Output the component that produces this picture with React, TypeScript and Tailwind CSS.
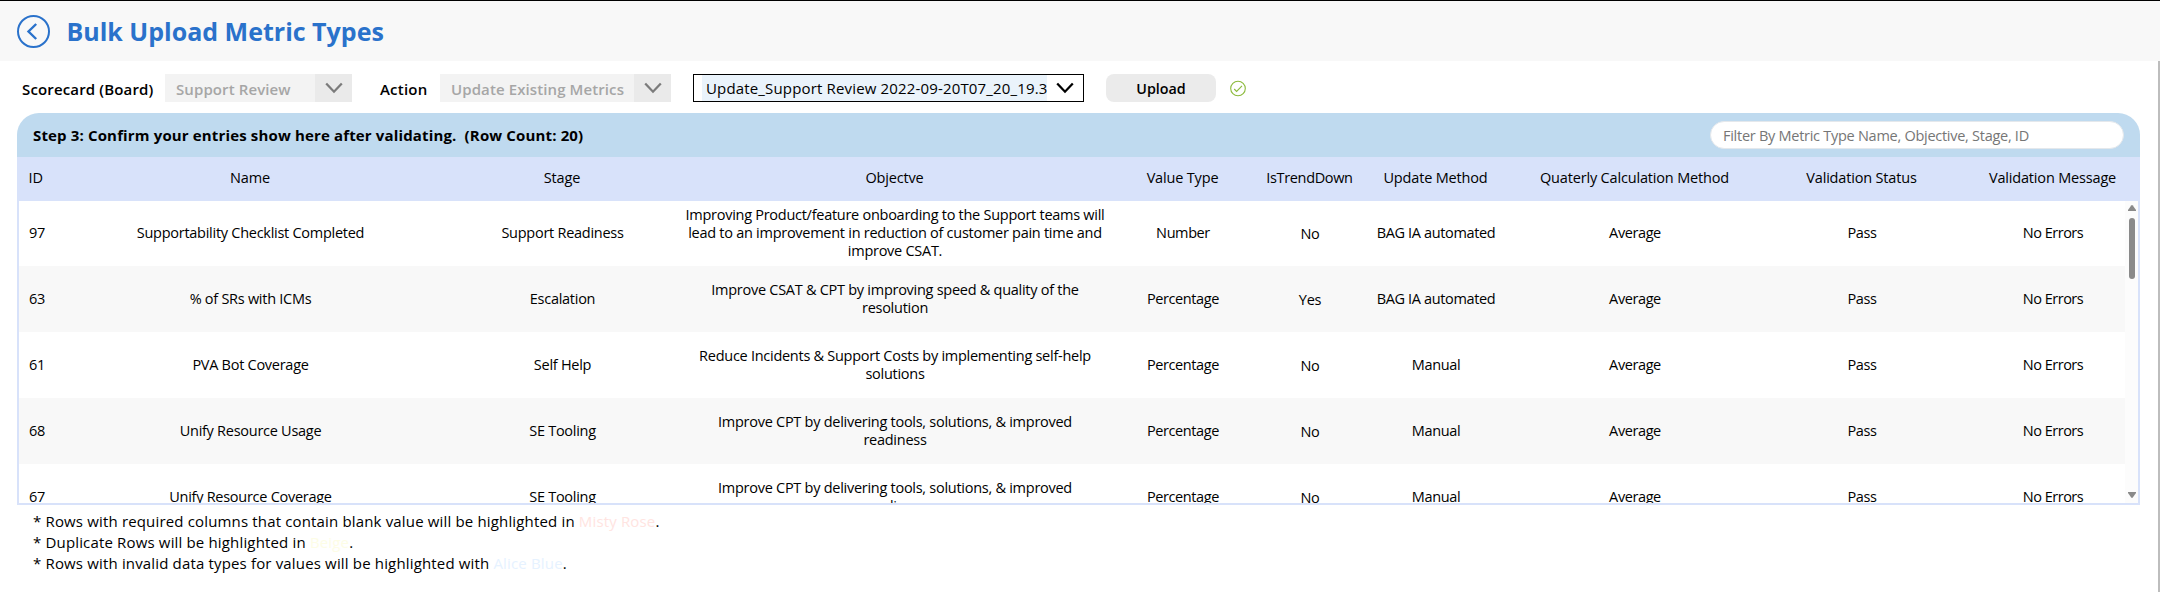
import React from "react";

const COLUMNS =
  "grid grid-cols-[42px_379px_245px_420px_156px_98px_154px_244px_210px_172px] w-[2120px] shrink-0 items-center text-center";

type Metric = {
  id: number;
  name: string;
  stage: string;
  objective: string[];
  valueType: string;
  trendDown: string;
  method: string;
};

const METRICS: Metric[] = [
  {
    id: 97,
    name: "Supportability Checklist Completed",
    stage: "Support Readiness",
    objective: [
      "Improving Product/feature onboarding to the Support teams will",
      "lead to an improvement in reduction of customer pain time and",
      "improve CSAT.",
    ],
    valueType: "Number",
    trendDown: "No",
    method: "BAG IA automated",
  },
  {
    id: 63,
    name: "% of SRs with ICMs",
    stage: "Escalation",
    objective: ["Improve CSAT & CPT by improving speed & quality of the", "resolution"],
    valueType: "Percentage",
    trendDown: "Yes",
    method: "BAG IA automated",
  },
  {
    id: 61,
    name: "PVA Bot Coverage",
    stage: "Self Help",
    objective: ["Reduce Incidents & Support Costs by implementing self-help", "solutions"],
    valueType: "Percentage",
    trendDown: "No",
    method: "Manual",
  },
  {
    id: 68,
    name: "Unify Resource Usage",
    stage: "SE Tooling",
    objective: ["Improve CPT by delivering tools, solutions, & improved", "readiness"],
    valueType: "Percentage",
    trendDown: "No",
    method: "Manual",
  },
  {
    id: 67,
    name: "Unify Resource Coverage",
    stage: "SE Tooling",
    objective: ["Improve CPT by delivering tools, solutions, & improved", "readiness"],
    valueType: "Percentage",
    trendDown: "No",
    method: "Manual",
  },
];

function Chevron({ color }: { color: string }) {
  return (
    <svg width="18" height="12" viewBox="0 0 18 12" fill="none" stroke={color} strokeWidth="2.3">
      <path d="M1.2 1.5 9 9.7l7.8-8.2" />
    </svg>
  );
}

function DisabledSelect({ label, className }: { label: string; className: string }) {
  return (
    <div className={`flex h-7 bg-[#f3f3f3] text-[#a6a6a6] ${className}`}>
      <span className="flex-1 whitespace-nowrap pl-[11px] pt-px font-semibold leading-7 tracking-[0.1px]">{label}</span>
      <span className="flex w-[37px] items-center justify-center bg-[#eaeaea]">
        <Chevron color="#7b7b7b" />
      </span>
    </div>
  );
}

function Header() {
  return (
    <header className="flex h-[61px] items-start border-t border-black bg-[#f8f8f8]">
      <svg className="ml-[17px] mt-[14px]" width="33" height="33" viewBox="0 0 33 33" fill="none" stroke="#2a72cb" strokeWidth="2">
        <circle cx="16.5" cy="16.5" r="15.5" />
        <path d="M19.2 9 11.5 16.5l7.7 7.5" strokeWidth="2.4" />
      </svg>
      <h1 className="ml-[16.5px] mt-[13px] whitespace-nowrap text-[25px] font-bold leading-[34px] text-[#2a72cb]">
        Bulk Upload Metric Types
      </h1>
    </header>
  );
}

function Toolbar() {
  return (
    <div className="flex h-[52px] items-start pt-[13px] text-[15px]">
      <span className="w-[165px] whitespace-nowrap pl-[22px] pt-px font-[550] leading-7 tracking-[0.15px]">
        Scorecard (Board)
      </span>
      <DisabledSelect label="Support Review" className="w-[187px]" />
      <span className="ml-[28px] w-[60px] pt-px font-[550] leading-7 tracking-[0.2px]">Action</span>
      <DisabledSelect label="Update Existing Metrics" className="w-[231px]" />
      <div className="ml-[22px] flex h-7 w-[391px] border border-black pl-[8px]">
        <span className="w-[345px] overflow-hidden whitespace-nowrap bg-[#eaf3fb] pl-[4px] leading-[26px] tracking-[0.16px]">
          Update_Support Review 2022-09-20T07_20_19.3
        </span>
        <span className="flex flex-1 items-center justify-center">
          <Chevron color="#000000" />
        </span>
      </div>
      <button className="ml-[22px] h-7 w-[110px] rounded-[8px] bg-[#ebebeb] pt-px text-[14.3px] font-[550] leading-[27px]">
        Upload
      </button>
      <svg className="ml-[14px] mt-[6px]" width="16" height="17" viewBox="0 0 16 17" fill="none" stroke="#8cba3c" strokeWidth="1.1">
        <circle cx="8" cy="8.5" r="7.3" />
        <path d="M4.2 9l2.4 2.5L12 5.8" />
      </svg>
    </div>
  );
}

function PanelBar() {
  return (
    <div className="flex h-11 items-start rounded-t-[22px] bg-[#bfdaef]">
      <h2 className="whitespace-pre pl-[16px] pt-[8px] text-[15px] font-bold leading-7 tracking-[0.15px]">
        {"Step 3: Confirm your entries show here after validating.  (Row Count: 20)"}
      </h2>
      <div className="ml-auto mr-[16px] mt-[8px] h-7 w-[414px] rounded-full border border-[#e4e8ec] bg-white pl-[12px] pt-px text-[14.5px] leading-[26px] tracking-[-0.27px] text-[#767676]">
        Filter By Metric Type Name, Objective, Stage, ID
      </div>
    </div>
  );
}

function ColumnHeadings() {
  return (
    <div className="h-11 overflow-hidden bg-[#d8e2fa] text-[14.5px] font-medium leading-5 tracking-[-0.17px]">
      <div className={`${COLUMNS} ml-[1.5px] h-[42px]`}>
        <span className="pl-[10px] text-left">ID</span>
        <span>Name</span>
        <span>Stage</span>
        <span>Objectve</span>
        <span>Value Type</span>
        <span className="tracking-[-0.35px]">IsTrendDown</span>
        <span>Update Method</span>
        <span>Quaterly Calculation Method</span>
        <span>Validation Status</span>
        <span>Validation Message</span>
      </div>
    </div>
  );
}

function MetricRow({ metric, shaded }: { metric: Metric; shaded: boolean }) {
  return (
    <div className={`${COLUMNS} h-[66px] ${shaded ? "bg-[#f8f8f8]" : "bg-white"}`}>
      <span className="pl-[10px] text-left">{metric.id}</span>
      <span>{metric.name}</span>
      <span>{metric.stage}</span>
      <span className="whitespace-nowrap">
        {metric.objective.map((line) => (
          <span key={line} className="block">
            {line}
          </span>
        ))}
      </span>
      <span className="tracking-[-0.4px]">{metric.valueType}</span>
      <span className="pt-[2px]">{metric.trendDown}</span>
      <span className="tracking-[-0.36px]">{metric.method}</span>
      <span className="tracking-[-0.4px]">Average</span>
      <span className="tracking-[-0.4px]">Pass</span>
      <span className="tracking-[-0.5px]">No Errors</span>
    </div>
  );
}

function ScrollBar() {
  return (
    <div className="flex w-[13px] shrink-0 flex-col items-center bg-[#fcfcfc] pb-[5px] pt-[4px]">
      <svg width="8" height="6" viewBox="0 0 8 6" fill="#8a8a8a">
        <path d="M3.2.5Q4-.3 4.8.5L8 5v1H0V5z" />
      </svg>
      <div className="mt-[7px] h-[61px] w-[6px] rounded-full bg-[#8a8a8a]" />
      <svg className="mt-auto" width="8" height="6" viewBox="0 0 8 6" fill="#8a8a8a">
        <path d="M3.2 5.5Q4 6.3 4.8 5.5L8 1V0H0v1z" />
      </svg>
    </div>
  );
}

function Notes() {
  return (
    <div className="pl-[33px] pt-[6px] text-[15px] leading-[21px] tracking-[0.16px]">
      <p>
        * Rows with required columns that contain blank value will be highlighted in{" "}
        <span className="text-[#ffe4e1]">Misty Rose</span>.
      </p>
      <p>
        * Duplicate Rows will be highlighted in <span className="text-[#fdfde6]">Beige</span>.
      </p>
      <p>
        * Rows with invalid data types for values will be highlighted with{" "}
        <span className="text-[#e6f2ff]">Alice Blue</span>.
      </p>
    </div>
  );
}

export default function App() {
  return (
    <div className="h-[592px] w-[2160px] overflow-hidden bg-white font-['Open_Sans',sans-serif] text-black">
      <Header />
      <div className="h-[531px] border-r-2 border-[#bdbdbd]">
        <Toolbar />
        <section className="ml-[17px] w-[2123px]">
          <PanelBar />
          <ColumnHeadings />
          <div className="flex h-[304px] border-x-2 border-b-2 border-[#d8e2fa]">
            <div className="min-w-0 flex-1 overflow-hidden text-[14.5px] leading-[18px] tracking-[-0.27px]">
              <div className="-mt-px flex flex-col">
                {METRICS.map((metric, index) => (
                  <MetricRow key={metric.id} metric={metric} shaded={index % 2 === 1} />
                ))}
              </div>
            </div>
            <ScrollBar />
          </div>
        </section>
        <Notes />
      </div>
    </div>
  );
}
